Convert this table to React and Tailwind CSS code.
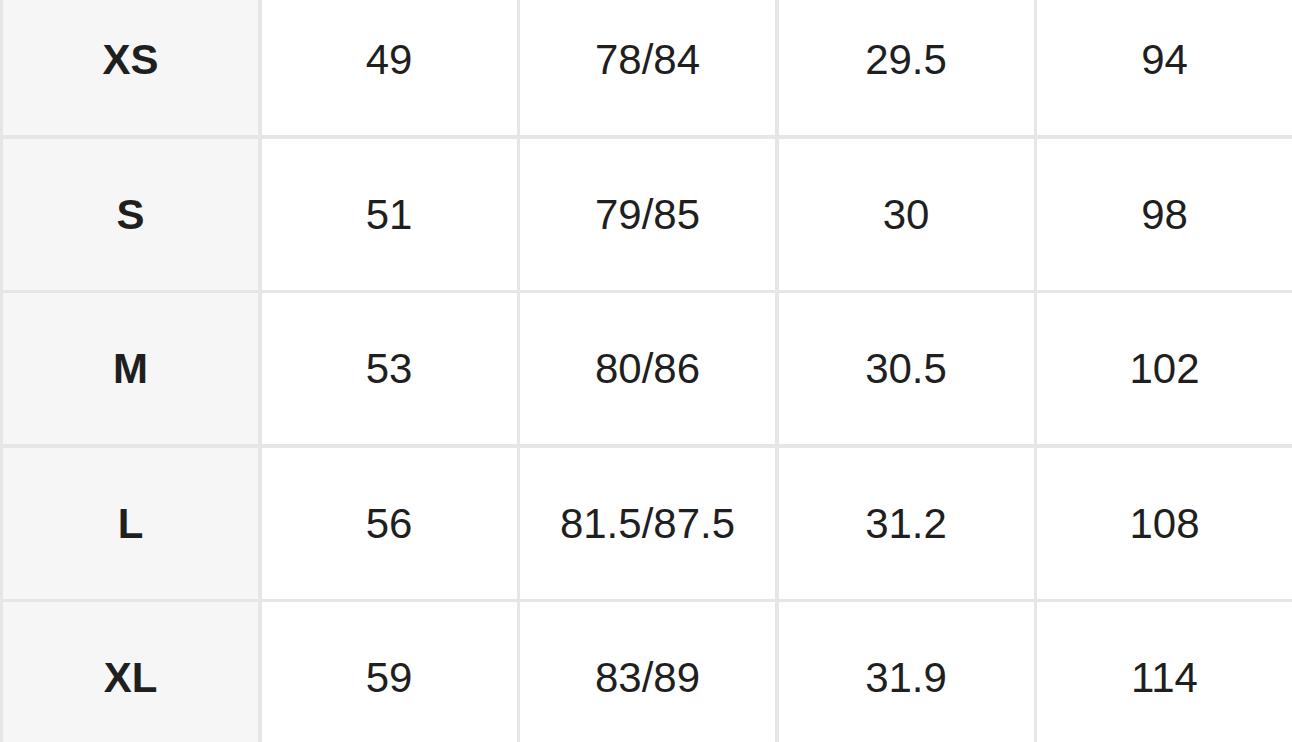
import React from 'react';

const rows = [
  ['XS', '49', '78/84', '29.5', '94'],
  ['S', '51', '79/85', '30', '98'],
  ['M', '53', '80/86', '30.5', '102'],
  ['L', '56', '81.5/87.5', '31.2', '108'],
  ['XL', '59', '83/89', '31.9', '114'],
];

export default function App() {
  return (
    <div
      className="w-[1292px] h-[742px] overflow-hidden bg-[#e6e6e6] text-[#1f1f1f]"
      style={{ fontFamily: '"Liberation Sans", Arial, sans-serif' }}
    >
      <div className="grid grid-cols-5 gap-[3.5px] pl-[3px] -mt-[16px]">
        {rows.map((row) =>
          row.map((cell, i) => (
            <div
              key={row[0] + i}
              className={`h-[151px] flex items-center justify-center text-[42px] ${
                i === 0 ? 'bg-[#f6f6f6] font-bold' : 'bg-white'
              }`}
            >
              {cell}
            </div>
          ))
        )}
      </div>
    </div>
  );
}
